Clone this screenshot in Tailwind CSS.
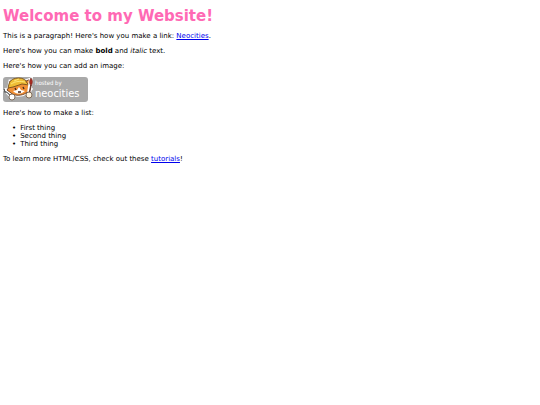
<!DOCTYPE html>
<html lang="en">
<head>
  <meta charset="UTF-8" />
  <title>My Website</title>
  <meta name="viewport" content="width=device-width, initial-scale=1.0" />
  <script src="https://cdn.jsdelivr.net/npm/@tailwindcss/browser@4"></script>
</head>

<body class="bg-white text-black font-['DejaVu_Sans',Verdana,sans-serif] text-[7px] leading-[8px]">
<main class="flex flex-col gap-[7px] px-[3px] pt-[7px]">
  <h1 class="font-bold text-[15px] leading-[18px] text-[#ff69b4]">Welcome to my Website!</h1>

  <p>This is a paragraph! Here's how you make a link: <a href="https://neocities.org" class="text-[#0000ee] underline">Neocities</a>.</p>

  <p>Here's how you can make <strong class="font-bold">bold</strong> and <em class="italic">italic</em> text.</p>

  <p>Here's how you can add an image:</p>

  <!-- Neocities badge -->
  <svg class="block w-[85px] h-[25px]" viewBox="0 0 85 25" role="img" aria-label="Hosted by Neocities">
    <rect width="85" height="25" rx="3" fill="#a9a9a9" />
    <!-- wrench -->
    <path d="M1 12l3 3 2-3M4 15l5 5" fill="none" stroke="#fff" stroke-width="3.500" />
    <path d="M1 12l1 3 3 0 1-3M4 15l5 5" fill="none" stroke="#555" stroke-width="1.400" />
    <!-- cat head -->
    <path d="M7 4L6 10 4 13l4 3c3 3 11 3 15 0l5-4-2-2 2-8-5 2z" fill="#f08f35" stroke="#fff" stroke-width="3" />
    <path d="M7 4L6 10 4 13l4 3c3 3 11 3 15 0l5-4-2-2 2-8-5 2z" fill="#f08f35" stroke="#65391c" stroke-width=".9" />
    <path d="M10 14l4-1 2-3 2 3 4 1-3 2c-3 1-6 1-9-2z" fill="#fff" />
    <path d="M6 7C7 3 11 1 16 1c4 0 7 2 8 5l2 2-7-1-9 3-5 1z" fill="#efbd35" stroke="#76501d" stroke-width=".9" />
    <path d="M8 7c5-3 9-3 14-2M11 4l5-2" fill="none" stroke="#fff08a" stroke-width=".8" />
    <path d="M12 11l1 2M20 10l1 2M15 15l3 0" stroke="#41251a" stroke-width="1.300" />
    <!-- brush -->
    <path d="M28 2l-2 15" stroke="#fff" stroke-width="4" />
    <path d="M28 8l-2 10" stroke="#6b3b2c" stroke-width="1.500" />
    <path d="M28 1c2 2 2 5 0 8-2-3-2-5 0-8z" fill="#a92a20" stroke="#5d231d" stroke-width=".5" />
    <!-- paws -->
    <circle cx="9" cy="20" r="3" fill="#fff" stroke="#75604d" stroke-width=".9" />
    <circle cx="26" cy="18" r="3" fill="#fff4df" stroke="#75604d" stroke-width=".9" />
    <g fill="#fff" font-family="DejaVu Sans Condensed, DejaVu Sans, sans-serif">
      <text x="32" y="8" font-size="6">hosted by</text>
      <text x="32" y="20" font-size="11">neocities</text>
    </g>
  </svg>

  <p>Here's how to make a list:</p>

  <ul class="pl-[9px]">
    <li class="flex gap-[4px] before:content-['•']">First thing</li>
    <li class="flex gap-[4px] before:content-['•']">Second thing</li>
    <li class="flex gap-[4px] before:content-['•']">Third thing</li>
  </ul>

  <p>To learn more HTML/CSS, check out these <a href="https://neocities.org/tutorials" class="text-[#0000ee] underline">tutorials</a>!</p>
</main>
</body>
</html>
